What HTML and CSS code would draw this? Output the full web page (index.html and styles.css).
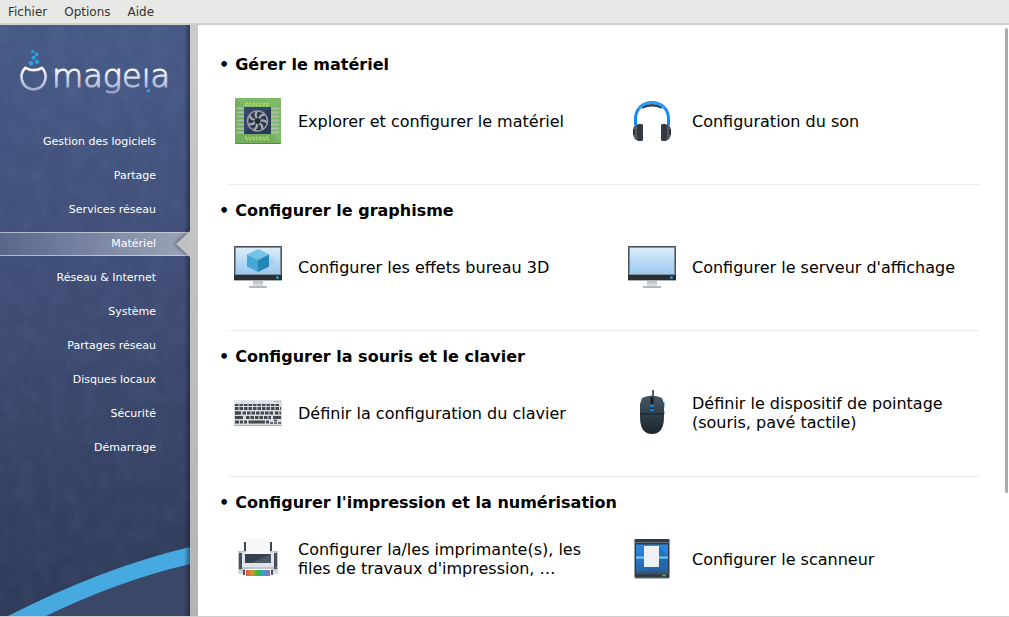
FILE: index.html
```html
<!DOCTYPE html>
<html lang="fr">
<head>
<meta charset="utf-8">
<meta name="viewport" content="width=device-width, initial-scale=1">
<title>Centre de contrôle Mageia</title>
<link rel="stylesheet" href="styles.css">
</head>
<body>
<header class="menubar">
  <button class="menu" type="button">Fichier</button>
  <button class="menu" type="button">Options</button>
  <button class="menu" type="button">Aide</button>
</header>
<div class="workspace">
  <aside class="sidebar">
    <svg class="texture" aria-hidden="true">
      <filter id="grain" x="0" y="0" width="100%" height="100%"><feTurbulence type="fractalNoise" baseFrequency=".06 .05" numOctaves="3" seed="4"/><feColorMatrix values="0 0 0 0 .4  0 0 0 0 .5  0 0 0 0 .85  1.2 0 0 0 -.45"/></filter>
      <rect width="100%" height="100%" filter="url(#grain)"/>
    </svg>
    <svg class="swoosh" viewBox="0 0 190 70" preserveAspectRatio="none" aria-hidden="true">
      <path d="M28 70Q110 32 190 14V70Z" fill="#3b4767"/>
      <path d="M8 70Q102 22 190 1V18Q118 35 46 70Z" fill="#46a9e0"/>
    </svg>
    <svg class="logo" viewBox="0 0 154 50" role="img" aria-label="mageia">
      <defs><linearGradient id="silver" gradientUnits="userSpaceOnUse" x1="0" y1="18" x2="0" y2="46"><stop offset="0" stop-color="#fff"/><stop offset="1" stop-color="#8d9ac4"/></linearGradient></defs>
      <g fill="#2e9fda"><circle cx="12.500" cy="2.500" r="1.600"/><circle cx="16.500" cy="5.500" r="1.900"/><circle cx="13.500" cy="8.800" r="2"/><circle cx="11" cy="14.300" r="2.400"/><circle cx="17" cy="12.800" r="2.200"/><circle cx="128.500" cy="41.800" r="1.800"/></g>
      <path d="M5.500 18.800C-1 25 0 39 13.500 40.500C27 39 28 25 22 18.800Q14 23.500 5.500 18.800Z" fill="none" stroke="url(#silver)" stroke-width="2.600" stroke-linejoin="round"/>
      <text class="wordmark" x="32" y="38" fill="url(#silver)" stroke="url(#silver)">mageıa</text>
    </svg>
    <nav class="nav" aria-label="Catégories">
      <a class="nav-item" href="#">Gestion des logiciels</a>
      <a class="nav-item" href="#">Partage</a>
      <a class="nav-item" href="#">Services réseau</a>
      <a class="nav-item current" href="#" aria-current="page">Matériel</a>
      <a class="nav-item" href="#">Réseau &amp; Internet</a>
      <a class="nav-item" href="#">Système</a>
      <a class="nav-item" href="#">Partages réseau</a>
      <a class="nav-item" href="#">Disques locaux</a>
      <a class="nav-item" href="#">Sécurité</a>
      <a class="nav-item" href="#">Démarrage</a>
    </nav>
  </aside>
  <div class="divider"></div>
  <main class="content">
    <section class="group">
      <h2 class="group-title">Gérer le matériel</h2>
      <div class="tiles">
        <a class="tile" href="#">
          <svg class="icon" viewBox="0 0 48 48" aria-hidden="true">
            <rect x="1" y="1" width="46" height="46" fill="#7db967"/><path d="M1 47V1L47 47Z" fill="#6aa556" opacity=".5"/><path d="M1 46.500H47" stroke="#568b49"/>
            <path d="M3 11.500H45M3 15.500H45M3 19.500H45M3 23.500H45M3 27.500H45M3 31.500H45M3 35.500H45" stroke="#aebfb0" stroke-width="2"/>
            <path d="M12 6.500H36M11 8.500H35M11 40.500H35M12 42.500H36" stroke="#c6dc55" stroke-width="1.500" stroke-dasharray="2 1.500"/>
            <rect x="10" y="10" width="27" height="27" fill="#35466f"/><path d="M37 10V37H10Z" fill="#293959"/>
            <circle cx="23.500" cy="24" r="10" fill="#2a3751" stroke="#999b9f" stroke-width="1.500"/>
            <g fill="none" stroke="#aaa" stroke-width="2.200"><path id="blade" d="M23.500 22Q20 18 23 14.500"/><use href="#blade" transform="rotate(51 23.500 24)"/><use href="#blade" transform="rotate(103 23.500 24)"/><use href="#blade" transform="rotate(154 23.500 24)"/><use href="#blade" transform="rotate(206 23.500 24)"/><use href="#blade" transform="rotate(257 23.500 24)"/><use href="#blade" transform="rotate(309 23.500 24)"/></g>
            <circle cx="23.500" cy="24" r="3" fill="#222b38"/>
          </svg>
          <span>Explorer et configurer le matériel</span>
        </a>
        <a class="tile" href="#">
          <svg class="icon" viewBox="0 0 48 48" aria-hidden="true">
            <path d="M14 10.500Q24 6 34 10.500" fill="none" stroke="#30425a" stroke-width="2.500"/>
            <path d="M7.500 28V22C7.500 0 40.500 0 40.500 22V28" fill="none" stroke="#1688f3" stroke-width="3"/><path d="M11 12C17 3.500 31 3.500 37 12" fill="none" stroke="#35a8f6" stroke-width="1.500"/>
            <path d="M7 28H10V43H8Q5 41 5 35Q5 30 7 28M41 28H38V43H40Q43 41 43 35Q43 30 41 28" fill="#555a5e"/>
            <rect x="9" y="27" width="6" height="17" rx="1.500" fill="#343a3f"/><rect x="33" y="27" width="6" height="17" rx="1.500" fill="#343a3f"/><path d="M6 32V38M42 32V38" stroke="#30363d" stroke-width="2"/>
          </svg>
          <span>Configuration du son</span>
        </a>
      </div>
    </section>
    <section class="group">
      <h2 class="group-title">Configurer le graphisme</h2>
      <div class="tiles">
        <a class="tile" href="#">
          <svg class="icon" viewBox="0 0 48 48" aria-hidden="true">
            <defs><linearGradient id="screen" x2="0" y2="1"><stop stop-color="#d9edfb"/><stop offset="1" stop-color="#9bc9ef"/></linearGradient><linearGradient id="stand" x2="0" y2="1"><stop stop-color="#aeb5bb"/><stop offset="1" stop-color="#dfe3e5"/></linearGradient></defs>
            <g id="monitor"><path d="M19 37H29V43H19Z" fill="url(#stand)"/><path d="M15 43H33V45H15Z" fill="#b3b7bf"/><path d="M0 3H48V37H0Z" fill="#4d5357"/><path d="M1 4H47V32H1Z" fill="#80909c"/><path d="M2 5H46V31H2Z" fill="url(#screen)"/><path d="M0 32H48V37H0Z" fill="#292f34"/><path d="M0 37.500H48" stroke="#aeb2b4"/><circle cx="43.500" cy="34.500" r="1.500" fill="#1d9ce3"/></g>
            <path d="M24 5L36 12L42 18L30 30L24 28Z" fill="#83b5dc" opacity=".2"/><path d="M24 6L35 11.500L24 17L13 11.500Z" fill="#73c3e7"/><path d="M13 11.500L24 17V29L13 23.500Z" fill="#43a7d8"/><path d="M35 11.500L24 17V29L35 23.500Z" fill="#2585b7"/>
          </svg>
          <span>Configurer les effets bureau 3D</span>
        </a>
        <a class="tile" href="#">
          <svg class="icon" viewBox="0 0 48 48" aria-hidden="true"><use href="#monitor"/></svg>
          <span>Configurer le serveur d'affichage</span>
        </a>
      </div>
    </section>
    <section class="group">
      <h2 class="group-title">Configurer la souris et le clavier</h2>
      <div class="tiles">
        <a class="tile" href="#">
          <svg class="icon" viewBox="0 0 48 48" aria-hidden="true">
            <path d="M0 11H48V37H0Z" fill="#d8dbdf"/><path d="M0 11H48V14H0Z" fill="#dfe5e8"/><path d="M0 36.500H48" stroke="#aeb4b9"/><path d="M40 12.500H47" stroke="#48c994" stroke-dasharray="2 1"/>
            <g stroke="#42484d" stroke-width="3"><path d="M1 16H46" stroke-width="2" stroke-dasharray="3.500 1"/><path d="M1 19.500H47M1 24H7M8.500 24H40" stroke-dasharray="3.500 1"/><path d="M41 24H47M1 28.500H9M12 28.500H37" stroke-dasharray="3.500 1"/><path d="M1 24H7M1 28.500H9M39 28.500H47M1 33H5M6 33H9M10 33H13M14.500 33H31M32 33H35"/><path d="M36 34H39M40 34H43M44 34H47M40 31.500H43" stroke-width="1.500"/></g>
          </svg>
          <span>Définir la configuration du clavier</span>
        </a>
        <a class="tile" href="#">
          <svg class="icon" viewBox="0 0 48 48" aria-hidden="true">
            <defs><linearGradient id="mouse" x2="0" y2="1"><stop stop-color="#465663"/><stop offset="1" stop-color="#1c252d"/></linearGradient></defs>
            <path d="M35 13H36.500V18L35 21ZM35 22H36.500V25H35Z" fill="#168de6"/><path d="M25 1V11" stroke="#20272c" stroke-width="1.500"/><path d="M14 9Q24 4 34 9L36 15L36 28Q36 45 24 45Q12 45 12 28V15Z" fill="url(#mouse)"/><path d="M12 25H36" fill="none" stroke="#17232e"/><path d="M24 8V15" stroke="#171e24" stroke-width="3"/><path d="M22 16H26V22H22Z" fill="#173652"/><path d="M22 17H26M22 21H26" stroke="#159df2" stroke-width="1.500"/>
          </svg>
          <span>Définir le dispositif de pointage (souris, pavé tactile)</span>
        </a>
      </div>
    </section>
    <section class="group">
      <h2 class="group-title">Configurer l'impression et la numérisation</h2>
      <div class="tiles">
        <a class="tile" href="#">
          <svg class="icon" viewBox="0 0 48 48" aria-hidden="true">
            <defs><linearGradient id="rainbow"><stop stop-color="#e3503c"/><stop offset=".25" stop-color="#d6953c"/><stop offset=".5" stop-color="#32bb32"/><stop offset=".7" stop-color="#329fd0"/><stop offset="1" stop-color="#a35fb7"/></linearGradient></defs>
            <path d="M10 7H38V20H10Z" fill="#3d4852"/><path d="M4 16H44V34L42 38H6L4 35Z" fill="#bfc5cc"/><path d="M8 17H40V32H8Z" fill="#e0e3e7"/><path d="M5 18H8V34H5ZM40 18H43V34H40Z" fill="#46505a"/><path d="M11 19H37V28H11Z" fill="#35414d"/><path d="M18 28L37 19V28Z" fill="#4b5866"/><path d="M12 4H36V19H12Z" fill="#f6f7f9"/><path d="M4 36H44V39H4Z" fill="#d4d7dd"/><path d="M9 35H39V40H9Z" fill="#4a535d"/><path d="M11 34H37V41H11Z" fill="#fff"/><path d="M12 35H36V41H12Z" fill="url(#rainbow)"/><path d="M41 32.500H43" stroke="#25a45c"/>
          </svg>
          <span>Configurer la/les imprimante(s), les files de travaux d'impression, …</span>
        </a>
        <a class="tile" href="#">
          <svg class="icon" viewBox="0 0 48 48" aria-hidden="true">
            <defs><linearGradient id="glass" x2="0" y2="1"><stop stop-color="#268bea"/><stop offset="1" stop-color="#2865a0"/></linearGradient></defs>
            <rect x="6.500" y="4" width="35" height="39" rx="1" fill="#323b44"/><path d="M7 7.500H41" stroke="#66717a"/><path d="M8 9.500H40V37.500H8Z" fill="url(#glass)"/><path d="M30 11L40 21V37H15L30 31Z" fill="#1d538c" opacity=".3"/><path d="M8 22.500H40" stroke="#74c9ff" stroke-width="2"/><path d="M16 11H31V32H16Z" fill="#eef0f3"/><path d="M7 38.500H41" stroke="#4c565e"/><path d="M34 40.500H38" stroke="#32c342" stroke-width="1.500"/><path d="M7 43H41" stroke="#6c7278"/>
          </svg>
          <span>Configurer le scanneur</span>
        </a>
      </div>
    </section>
  </main>
  <div class="scrollbar"><div class="thumb"></div></div>
</div>
</body>
</html>
```
FILE: styles.css
```css
* { box-sizing: border-box; }
body {
  margin: 0;
  height: 100vh;
  display: flex;
  flex-direction: column;
  overflow: hidden;
  background: #fff;
  color: #000;
  font: 16px/19px "DejaVu Sans", sans-serif;
}
a { color: inherit; text-decoration: none; }
.menubar {
  display: flex;
  gap: 17px;
  padding: 1px 8px 0;
  background: #e8e8e6;
  border-bottom: 2px solid #d0d1cc;
}
.menu {
  padding: 0;
  border: 0;
  background: none;
  color: #2e3436;
  font: 12px/22px "DejaVu Sans", sans-serif;
}
.workspace {
  flex: 1;
  min-height: 0;
  display: flex;
  border-bottom: 1px solid #cfcfcf;
}
.sidebar {
  position: relative;
  flex: 0 0 190px;
  padding-top: 24px;
  overflow: hidden;
  background: linear-gradient(#475a87, #3e4c73 50%, #2e3a57);
}
.sidebar::after {
  content: "";
  position: absolute;
  inset: 0 0 0 auto;
  width: 6px;
  background: linear-gradient(90deg, transparent, rgba(15, 22, 40, .5));
  pointer-events: none;
}
.texture {
  position: absolute;
  inset: 0;
  width: 100%;
  height: 100%;
  opacity: .1;
}
.swoosh {
  position: absolute;
  inset: auto 0 0;
  width: 100%;
  height: 70px;
}
.logo {
  position: relative;
  display: block;
  width: 154px;
  height: 50px;
  margin-left: 20px;
}
.wordmark {
  font: 200 32px "DejaVu Sans", sans-serif;
  stroke-width: 1px;
}
.nav {
  position: relative;
  z-index: 1;
  display: flex;
  flex-direction: column;
  gap: 10px;
  padding-top: 31px;
}
.nav-item {
  position: relative;
  padding-right: 34px;
  border: solid transparent;
  border-width: 1px 0;
  color: #fff;
  font-size: 11px;
  line-height: 22px;
  text-align: right;
}
.nav-item.current {
  border-color: rgba(220, 225, 235, .65);
  background: linear-gradient(90deg, rgba(180, 190, 210, .2), rgba(200, 205, 215, .68));
}
.current::after {
  content: "";
  position: absolute;
  right: 0;
  top: -2px;
  border: solid transparent;
  border-width: 13px 14px 13px 0;
  border-right-color: #c1c1c1;
  filter: drop-shadow(-1px 0 2px rgba(30, 40, 60, .6));
}
.divider {
  flex: 0 0 8px;
  background: linear-gradient(#cbcbcb, #b4b4b4);
}
.content {
  flex: 1;
  min-width: 0;
  overflow: hidden;
  padding: 14px 25px 0 29px;
}
.group {
  padding: 16px 0 39px;
  border-bottom: 1px solid #eee;
}
.group-title {
  display: flex;
  gap: 6px;
  margin: 0 0 23px -8px;
  font-size: 16px;
  line-height: 19px;
}
.group-title::before { content: "•"; }
.tiles {
  display: grid;
  grid-template-columns: 394fr 352fr;
  padding-left: 7px;
}
.tile {
  display: flex;
  align-items: center;
  gap: 16px;
  height: 48px;
  padding-right: 24px;
}
.icon { flex: 0 0 48px; height: 48px; }
.scrollbar {
  flex: 0 0 4px;
  padding: 3px 1px 0 0;
}
.thumb {
  height: 79%;
  border-radius: 2px;
  background: #a9acab;
}
```
